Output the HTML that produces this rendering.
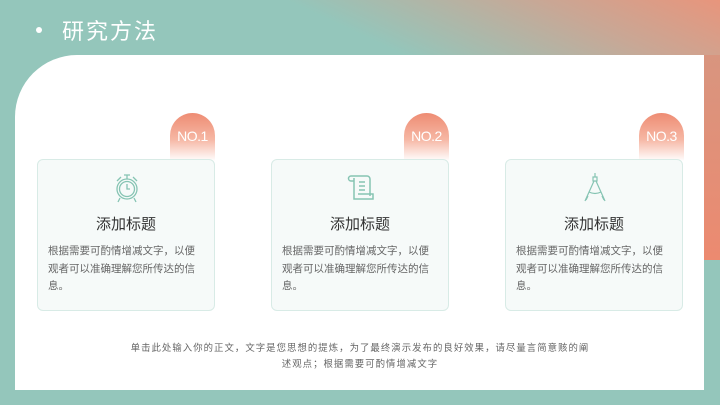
<!DOCTYPE html>
<html><head><meta charset="utf-8"><style>
*{margin:0;padding:0;box-sizing:border-box}
body{width:720px;height:405px;overflow:hidden;position:relative;font-family:"Liberation Sans","Noto Sans CJK SC",sans-serif;background:#94c6bb}
.grad{position:absolute;left:0;top:0;width:720px;height:260px;background:linear-gradient(205deg,#e8957c 0%,#c9a795 14%,rgba(148,198,187,0) 34%)}
.strip{position:absolute;left:700px;top:55px;width:20px;height:205px;background:linear-gradient(#d8957f,#ec8a70)}
.title{position:absolute;left:36px;top:14px;color:#fff;font-size:22px;letter-spacing:2px}
.title span{display:inline-block;width:6px;height:6px;border-radius:50%;background:#fff;margin-right:20px;vertical-align:middle;position:relative;top:-3px}
.panel{position:absolute;left:15px;top:55px;width:689px;height:335px;background:#fff;border-top-left-radius:62px}
.card{position:absolute;top:159px;width:178px;height:152px;background:#f6faf9;border:1px solid #d8ebe6;border-radius:6px;text-align:center}
.badge{position:absolute;top:113px;width:45px;height:48px;border-radius:23px 23px 0 0;background:linear-gradient(#ee8c73,#f6b7a4 55%,#fff);color:#fff;font-size:14px;text-align:center;padding-top:15px;letter-spacing:-0.5px}
.card svg{position:absolute;left:73px;top:12px}
.card h3{position:absolute;top:53px;width:100%;font-size:15px;font-weight:normal;color:#333}
.card p{position:absolute;left:10px;width:152px;top:83px;text-align:left;font-size:10.5px;line-height:17.5px;color:#666}
.foot{position:absolute;left:60px;width:600px;top:340px;text-align:center;font-size:9.4px;letter-spacing:1.05px;line-height:16px;color:#666}
</style></head><body>
<div class="grad"></div><div class="strip"></div>
<div class="title"><span></span>研究方法</div>
<div class="panel"></div>
<div class="badge" style="left:170px">NO.1</div>
<div class="badge" style="left:404px">NO.2</div>
<div class="badge" style="left:639px">NO.3</div>
<div class="card" style="left:37px">
<svg width="32" height="32" viewBox="0 0 32 32" fill="none" stroke="#86c4b3" stroke-width="1.3"><circle cx="16" cy="17" r="10"/><circle cx="16" cy="17" r="7.5"/><path d="M16 12v5h3M13 3h6M16 3v4M6 9l4-4M26 9l-4-4M9 26l-2 4M23 26l2 4"/></svg>
<h3>添加标题</h3><p>根据需要可酌情增减文字，以便<br>观者可以准确理解您所传达的信<br>息。</p></div>
<div class="card" style="left:271px">
<svg width="32" height="32" viewBox="0 0 32 32" fill="none" stroke="#86c4b3" stroke-width="1.5"><path d="M6 4h16a3 3 0 0 1 3 3v17M6 4a2 2 0 0 0 0 5h3v18h19v-5H13M9 9V6M14 10h6M14 14h6M14 18h6"/></svg>
<h3>添加标题</h3><p>根据需要可酌情增减文字，以便<br>观者可以准确理解您所传达的信<br>息。</p></div>
<div class="card" style="left:505px">
<svg width="32" height="32" viewBox="0 0 32 32" fill="none" stroke="#86c4b3" stroke-width="1.2"><path d="M16 1v4M14 5h4v4h-4zM15 9l-9 20M17 9l9 20M10 20q6 3 12 0M9 24l-2 4M23 24l2 4"/></svg>
<h3>添加标题</h3><p>根据需要可酌情增减文字，以便<br>观者可以准确理解您所传达的信<br>息。</p></div>
<div class="foot">单击此处输入你的正文，文字是您思想的提炼，为了最终演示发布的良好效果，请尽量言简意赅的阐<br>述观点；根据需要可酌情增减文字</div>
</body></html>
